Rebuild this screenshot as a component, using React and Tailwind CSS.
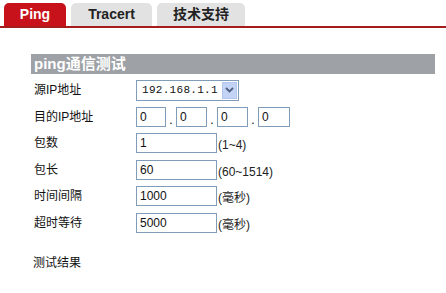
import React from 'react'

const font = { fontFamily: '"Liberation Sans", "Noto Sans CJK SC", sans-serif' }

const Tab = ({ label, active }) => (
  <div
    className={
      'h-[23px] rounded-t-[5px] flex items-center justify-center text-[14px] font-bold ' +
      (active ? 'bg-[#c8121b] text-white' : 'bg-[#e2e2e2] text-[#222]')
    }
  >
    {label}
  </div>
)

const Row = ({ label, children }) => (
  <div className="flex items-center h-[26.5px]">
    <div className="w-[105px] pl-[3px] text-[12px] text-[#111]">{label}</div>
    <div className="flex items-center">{children}</div>
  </div>
)

const Box = ({ value, w }) => (
  <div
    className={
      'h-[20px] border border-[#7f9db9] bg-white flex items-center pl-[3px] text-[12px] text-[#111] ' + w
    }
  >
    {value}
  </div>
)

const Hint = ({ children }) => <span className="ml-[1px] mt-[4px] text-[12px] text-[#222]">{children}</span>

export default function App() {
  return (
    <div className="w-[446px] h-[293px] bg-white overflow-hidden" style={font}>
      <div className="flex gap-[5px] pl-[4px] pt-[3px]">
        <div className="w-[62px]"><Tab label="Ping" active /></div>
        <div className="w-[81px]"><Tab label="Tracert" /></div>
        <div className="w-[88px]"><Tab label="技术支持" /></div>
      </div>
      <div className="h-[2px] bg-[#a51c1c]" />

      <div className="pl-[31px] pr-[11px] pt-[26px]">
        <div className="h-[20px] bg-[#9ea2a7] flex items-center pl-[3px] text-[15px] font-bold text-white">
          ping通信测试
        </div>
        <div className="pt-[3px]">
          <Row label="源IP地址">
            <div className="w-[103px] h-[21px] border border-[#7f9db9] bg-white flex items-center justify-between pl-[5px] pr-[1px]">
              <span className="text-[11px] tracking-[0.3px] text-[#111]" style={{ fontFamily: '"Liberation Mono", monospace' }}>192.168.1.1</span>
              <span className="w-[15px] h-[17px] bg-[#c3d3f5] border border-[#b4c6ee] flex items-center justify-center">
                <svg width="9" height="6" viewBox="0 0 9 6">
                  <path d="M1 1 L4.5 4.5 L8 1" fill="none" stroke="#4d6185" strokeWidth="1.8" />
                </svg>
              </span>
            </div>
          </Row>
          <Row label="目的IP地址">
            <Box value="0" w="w-[30px]" />
            <span className="w-[10px] text-center text-[12px] mt-[6px]">.</span>
            <Box value="0" w="w-[31px]" />
            <span className="w-[10px] text-center text-[12px] mt-[6px]">.</span>
            <Box value="0" w="w-[31px]" />
            <span className="w-[10px] text-center text-[12px] mt-[6px]">.</span>
            <Box value="0" w="w-[32px]" />
          </Row>
          <Row label="包数">
            <Box value="1" w="w-[81px]" />
            <Hint>(1~4)</Hint>
          </Row>
          <Row label="包长">
            <Box value="60" w="w-[81px]" />
            <Hint>(60~1514)</Hint>
          </Row>
          <Row label="时间间隔">
            <Box value="1000" w="w-[81px]" />
            <Hint>(毫秒)</Hint>
          </Row>
          <Row label="超时等待">
            <Box value="5000" w="w-[81px]" />
            <Hint>(毫秒)</Hint>
          </Row>
        </div>
        <div className="mt-[18px] pl-[2px] text-[12px] text-[#111]">测试结果</div>
      </div>
    </div>
  )
}
